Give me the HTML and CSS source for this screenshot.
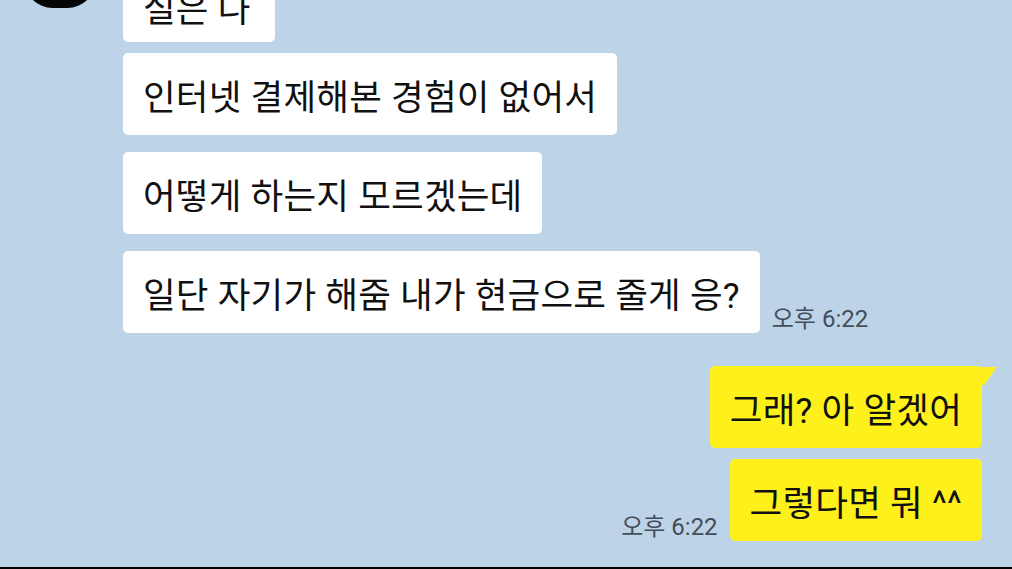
FILE: index.html
```
<!DOCTYPE html>
<html lang="ko">
<head>
    <meta charset="UTF-8">
    <meta name="viewport" content="width=device-width, initial-scale=1.0">
    <title>채팅</title>
    <link rel="stylesheet" href="styles.css">
</head>
<body>
    <div class="screen">
        <div class="avatar"></div>
        <div class="chat">
            <div class="row first">
                <div class="bubble">실은 나</div>
            </div>
            <div class="row gap-s">
                <div class="bubble">인터넷 결제해본 경험이 없어서</div>
            </div>
            <div class="row">
                <div class="bubble">어떻게 하는지 모르겠는데</div>
            </div>
            <div class="row">
                <div class="bubble">일단 자기가 해줌 내가 현금으로 줄게 응?</div>
                <span class="time">오후 6:22</span>
            </div>
            <div class="row me gap-l">
                <div class="bubble tail">그래? 아 알겠어</div>
            </div>
            <div class="row me gap-s">
                <span class="time">오후 6:22</span>
                <div class="bubble">그렇다면 뭐 ^^</div>
            </div>
        </div>
    </div>
</body>
</html>
```

FILE: styles.css
```
body {
    margin: 0;
    background: #bdd3e8;
    font-family: Roboto, "Noto Sans CJK KR", "Noto Sans", sans-serif;
    overflow: hidden;
}
.screen {
    position: relative;
    height: 567px;
    border-bottom: 2px solid #000;
    overflow: hidden;
}
.avatar {
    position: absolute;
    left: 24px;
    top: -64px;
    width: 72px;
    height: 72px;
    border-radius: 40%;
    background: #050505;
}
.chat {
    display: flex;
    flex-direction: column;
    padding: 0 30px 0 123px;
    margin-top: -30px;
}
.row {
    display: flex;
    align-items: flex-end;
    gap: 12px;
    margin-top: 17px;
}
.row.first {
    margin-top: 0;
}
.row.first .bubble {
    height: 72px;
    padding-right: 24px;
}
.row.gap-s {
    margin-top: 11px;
}
.row.gap-l {
    margin-top: 33px;
}
.row.me {
    justify-content: flex-end;
}
.bubble {
    position: relative;
    background: #fff;
    color: #111;
    border-radius: 5px;
    height: 82px;
    padding: 0 20px;
    display: flex;
    align-items: center;
    font-size: 35.5px;
    letter-spacing: 0.2px;
    white-space: nowrap;
}
.me .bubble {
    background: #fef01b;
}
.tail::after {
    content: "";
    position: absolute;
    right: -15px;
    top: 1px;
    width: 16px;
    height: 18px;
    background: #fef01b;
    clip-path: polygon(0 0, 100% 0, 20% 100%, 0 100%);
}
.time {
    font-size: 24px;
    color: #434d58;
    line-height: 1;
    padding-bottom: 2px;
}
```
